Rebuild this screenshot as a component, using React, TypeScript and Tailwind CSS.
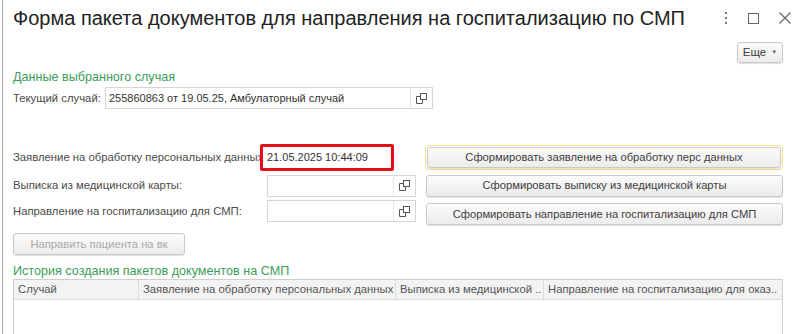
import React from "react";

const OpenIcon = () => (
  <svg width="11" height="11" viewBox="0 0 11 11" fill="none" stroke="#555" strokeWidth="1">
    <rect x="4.5" y="0.5" width="6" height="6" />
    <path d="M4.5 3.5 H0.5 V10.5 H6.5 V6.5" />
  </svg>
);

const Btn = ({ children, className = "" }: { children: React.ReactNode; className?: string }) => (
  <div
    className={
      "flex items-center justify-center whitespace-nowrap rounded-[3px] border border-[#c9c9c9] bg-gradient-to-b from-[#fbfbfb] to-[#ececec] text-[11.2px] text-[#404040] shadow-[0_1px_1px_rgba(0,0,0,0.12)] " +
      className
    }
  >
    {children}
  </div>
);

const Field = ({ value = "", className = "", icon = true }: { value?: string; className?: string; icon?: boolean }) => (
  <div className={"flex items-center border border-[#d6d6d6] bg-white " + className}>
    <div className="flex-1 truncate pl-[3px] text-[11px] text-[#333]">{value}</div>
    {icon && (
      <div className="flex h-full w-[22px] items-center justify-center border-l border-[#e6e6e6]">
        <OpenIcon />
      </div>
    )}
  </div>
);

export default function App() {
  return (
    <div
      className="h-[334px] w-[801px] overflow-hidden bg-white pl-[2px]"
      style={{ fontFamily: '"Liberation Sans", Arial, sans-serif' }}
    >
      <div className="h-full border-l border-[#a9a9a9] pl-[10px] pr-[18px]">
        {/* header */}
        <div className="flex h-[40px] items-start justify-between pt-[6px]">
          <div className="whitespace-nowrap text-[20px] leading-[24px] text-[#222]">
            Форма пакета документов для направления на госпитализацию по СМП
          </div>
          <div className="mr-[-8px] flex items-center gap-[20px] pt-[6px] text-[#666]">
            <svg width="4" height="12" viewBox="0 0 4 12" fill="#777">
              <rect x="1" y="0" width="2" height="2" />
              <rect x="1" y="5" width="2" height="2" />
              <rect x="1" y="10" width="2" height="2" />
            </svg>
            <svg width="11" height="11" viewBox="0 0 11 11" fill="none" stroke="#666">
              <rect x="0.5" y="0.5" width="10" height="10" />
            </svg>
            <svg width="12" height="12" viewBox="0 0 12 12" fill="none" stroke="#666" strokeWidth="1.2">
              <path d="M0.5 0.5 L11.5 11.5 M11.5 0.5 L0.5 11.5" />
            </svg>
          </div>
        </div>
        {/* Еще */}
        <div className="flex h-[27px] items-start justify-end pt-[2px]">
          <Btn className="h-[21px] w-[46px] gap-[5px] text-[11.5px]">
            <span>Еще</span>
            <span className="text-[6px] text-[#666]">▼</span>
          </Btn>
        </div>
        {/* group 1 */}
        <div className="flex h-[20px] items-center text-[12.6px] leading-[15px] text-[#3c9c58]">
          Данные выбранного случая
        </div>
        <div className="flex h-[22px] items-center">
          <div className="w-[92px] whitespace-nowrap text-[11.3px] text-[#4a4a4a]">Текущий случай:</div>
          <Field className="h-[22px] w-[328px]" value="255860863 от 19.05.25, Амбулаторный случай" />
        </div>
        <div className="h-[35px]" />
        {/* row 1 */}
        <div className="flex h-[27px] items-center">
          <div className="w-[247px] whitespace-nowrap text-[11.3px] text-[#4a4a4a]">
            Заявление на обработку персональных данных
          </div>
          <div className="flex h-[27px] w-[134px] items-center rounded-[2px] border-[3px] border-[#e3101a] px-[3px]">
            <div className="flex h-[19px] flex-1 items-center bg-white pl-[1px] text-[11px] text-[#333]">
              21.05.2025 10:44:09
            </div>
          </div>
          <div className="ml-[31px] flex h-[25px] flex-1 items-center rounded-[3px] border border-[#f2e08a] p-[1px]">
            <Btn className="h-full w-full">Сформировать заявление на обработку перс данных</Btn>
          </div>
        </div>
        {/* row 2 */}
        <div className="mt-[3px] flex h-[23px] items-center">
          <div className="w-[254px] whitespace-nowrap text-[11.3px] text-[#4a4a4a]">Выписка из медицинской карты:</div>
          <Field className="h-[22px] w-[149px]" />
          <Btn className="ml-[10px] h-[22px] flex-1">Сформировать выписку из медицинской карты</Btn>
        </div>
        {/* row 3 */}
        <div className="mt-[3px] flex h-[25px] items-start">
          <div className="flex h-[22px] w-[254px] items-center whitespace-nowrap text-[11.3px] text-[#4a4a4a]">
            Направление на госпитализацию для СМП:
          </div>
          <Field className="h-[22px] w-[149px]" />
          <Btn className="ml-[10px] mt-[3px] h-[22px] flex-1">
            Сформировать направление на госпитализацию для СМП
          </Btn>
        </div>
        <div className="mt-[8px] flex h-[22px]">
          <Btn className="h-[22px] w-[172px] text-[#aaa]">Направить пациента на вк</Btn>
        </div>
        <div className="mt-[5px] flex h-[19px] items-end text-[12.6px] leading-[15px] text-[#3c9c58]">
          История создания пакетов документов на СМП
        </div>
        {/* table */}
        <div className="h-[60px] border border-[#cfcfcf] bg-white">
          <div className="flex h-[20px] border-b border-[#dcdcdc] bg-[#f3f3f3] text-[11.3px] text-[#555]">
            <div className="flex w-[125px] items-center border-r border-[#dcdcdc] pl-[4px]">Случай</div>
            <div className="flex w-[257px] items-center whitespace-nowrap border-r border-[#dcdcdc] pl-[4px]">
              Заявление на обработку персональных данных
            </div>
            <div className="flex w-[148px] items-center whitespace-nowrap border-r border-[#dcdcdc] pl-[4px]">
              Выписка из медицинской ..
            </div>
            <div className="flex flex-1 items-center whitespace-nowrap pl-[4px]">
              Направление на госпитализацию для оказ..
            </div>
          </div>
        </div>
      </div>
    </div>
  );
}
